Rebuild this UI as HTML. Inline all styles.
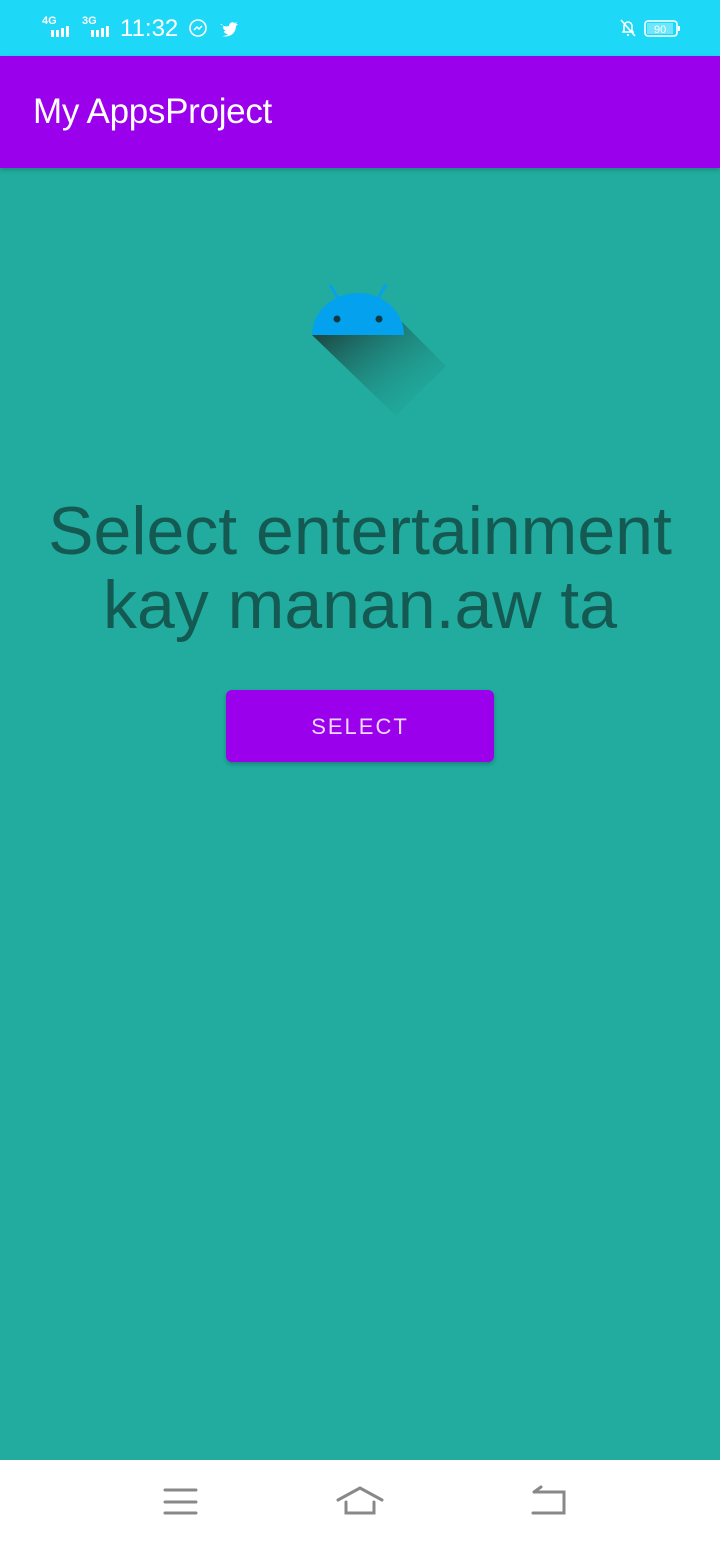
<!DOCTYPE html>
<html><head><meta charset="utf-8"><style>
html,body{margin:0;width:720px;height:1544px;overflow:hidden}
body{background:#21ac9f;font-family:"Liberation Sans",sans-serif;position:relative}
.sb{position:absolute;top:0;left:0;width:720px;height:56px;background:#1ed8f8;color:#fff}
.ab{position:absolute;top:56px;left:0;width:720px;height:112px;background:#9b00ec;box-shadow:0 2px 4px rgba(0,0,0,.2)}
.ab span{position:absolute;left:33px;top:36px;font-size:35px;color:#fff;letter-spacing:-0.3px}
.t{position:absolute;top:494px;left:0;width:720px;text-align:center;font-size:68px;line-height:74px;color:#145a52}
.btn{position:absolute;left:226px;top:690px;width:268px;height:72px;background:#9b00ec;border-radius:6px;color:#f0d8ff;font-size:22px;letter-spacing:2px;text-align:center;line-height:74px;box-shadow:0 2px 4px rgba(0,0,0,.25)}
.nav{position:absolute;top:1460px;left:0;width:720px;height:84px;background:#fff}
</style></head><body>
<div class="sb">
<span style="position:absolute;left:42px;top:15px;font-size:11px;font-weight:bold">4G</span>
<span style="position:absolute;left:82px;top:15px;font-size:11px;font-weight:bold">3G</span>
<svg style="position:absolute;left:50px;top:26px" width="75" height="12"><g fill="#fff"><rect x="1" y="4" width="3" height="7"/><rect x="6" y="4" width="3" height="7"/><rect x="11" y="2" width="3" height="9"/><rect x="16" y="0" width="3" height="11"/><rect x="41" y="4" width="3" height="7"/><rect x="46" y="4" width="3" height="7"/><rect x="51" y="2" width="3" height="9"/><rect x="56" y="0" width="3" height="11"/></g></svg>
<span style="position:absolute;left:120px;top:15px;font-size:24px">11:32</span>
<svg style="position:absolute;left:188px;top:18px" width="60" height="22"><circle cx="10" cy="10" r="8" fill="none" stroke="#fff" stroke-width="1.6"/><path d="M6 12l3-3 2 2 3-3" stroke="#fff" fill="none" stroke-width="1.5"/><path d="M32 6c3 2 6 3 9 2 0-3 3-5 6-3l2-1-1 2 2 0-2 2c0 7-6 12-14 10 3 0 5-1 6-2-2 0-4-1-4-3h2c-2-1-3-2-3-4l2 1c-2-1-3-3-3-4z" fill="#fff"/></svg>
<svg style="position:absolute;left:618px;top:17px" width="66" height="24"><path d="M4 15h12M6 15V9a4 4 0 018 0v6M10 17v2M3 3l14 16" stroke="#fff" stroke-width="1.6" fill="none"/><rect x="27" y="4" width="32" height="15" rx="3" fill="none" stroke="#fff" stroke-width="1.6"/><rect x="29" y="6" width="26" height="11" fill="#6ee6fb"/><rect x="60" y="9" width="2" height="5" fill="#fff"/><text x="36" y="16" font-size="11" fill="#fff" font-family="Liberation Sans">90</text></svg>
</div>
<div class="ab"><span>My AppsProject</span></div>
<svg style="position:absolute;left:0;top:270px" width="720" height="170">
<defs><linearGradient id="g" x1="0" y1="0" x2="1" y2="1"><stop offset="0" stop-color="#1a2a2a" stop-opacity=".95"/><stop offset="1" stop-color="#21ac9f" stop-opacity="0"/></linearGradient></defs>
<polygon points="312,65 404,65 400,50 446,96 396,146" fill="url(#g)"/>
<path d="M312 65a46 42 0 0192 0z" fill="#04a2ee"/>
<path d="M330 15l8 13M386 15l-8 13" stroke="#04a2ee" stroke-width="3"/>
<circle cx="337" cy="49" r="3.5" fill="#103a40"/><circle cx="379" cy="49" r="3.5" fill="#103a40"/>
</svg>
<div class="t">Select entertainment<br>kay manan.aw ta</div>
<div class="btn">SELECT</div>
<div class="nav">
<svg width="720" height="84"><g stroke="#888" stroke-width="3" fill="none" stroke-linecap="round"><path d="M165 30h31M165 42h31M165 53h31"/><path d="M338 40l22-12 22 12M346 42v11h28V42"/><path d="M534 32h30v21h-31M534 32l7-5"/></g></svg>
</div>
</body></html>
